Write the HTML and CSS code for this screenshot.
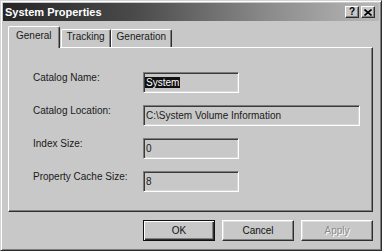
FILE: index.html
```html
<!DOCTYPE html>
<html>
<head>
<meta charset="utf-8">
<title>System Properties</title>
<link rel="stylesheet" href="styles.css">
</head>
<body>
<div class="window">
  <div class="titlebar">
    <span class="title">System Properties</span>
    <div class="caption-btns">
      <span class="cbtn help">?</span>
      <span class="cbtn close"><svg width="8" height="7" viewBox="0 0 8 7"><path d="M0.5 0.5 L7.5 6.5 M7.5 0.5 L0.5 6.5" stroke="#000" stroke-width="1.6" fill="none"/></svg></span>
    </div>
  </div>
  <div class="body">
    <div class="tabs">
      <div class="tab active">General</div>
      <div class="tab">Tracking</div>
      <div class="tab">Generation</div>
    </div>
    <div class="panel">
      <div class="fields">
        <span class="label">Catalog Name:</span>
        <div class="field short"><span class="sel">System</span></div>
        <span class="label">Catalog Location:</span>
        <div class="field long">C:\System Volume Information</div>
        <span class="label">Index Size:</span>
        <div class="field short">0</div>
        <span class="label">Property Cache Size:</span>
        <div class="field short">8</div>
      </div>
    </div>
    <div class="actions">
      <button class="btn default">OK</button>
      <button class="btn">Cancel</button>
      <button class="btn disabled">Apply</button>
    </div>
  </div>
</div>
</body>
</html>
```

FILE: styles.css
```css
html, body {
  margin: 0;
  padding: 0;
}
body {
  width: 382px;
  height: 251px;
  overflow: hidden;
  background: #c8c8c8;
  font-family: "Liberation Sans", Arial, sans-serif;
  font-size: 10px;
  color: #1a1a1a;
}
.window {
  box-sizing: border-box;
  width: 382px;
  height: 251px;
  background: #c8c8c8;
  border: 1px solid;
  border-color: #d4d4d4 #2e2e2e #2e2e2e #d4d4d4;
  box-shadow: inset 1px 1px 0 #fff, inset -1px -1px 0 #7c7c7c;
  padding: 2px;
  display: flex;
  flex-direction: column;
}
.titlebar {
  height: 18px;
  display: flex;
  align-items: center;
  background: linear-gradient(90deg, #262626 0%, #4a4a4a 35%, #8a8a8a 70%, #b8b8b8 100%);
  padding-left: 2px;
}
.title {
  flex: 1;
  color: #fff;
  font-weight: bold;
  font-size: 11px;
  line-height: 18px;
}
.caption-btns {
  display: flex;
  gap: 2px;
  margin-right: 4px;
}
.cbtn {
  box-sizing: border-box;
  width: 14px;
  height: 12px;
  background: #c8c8c8;
  border: 1px solid;
  border-color: #fff #2e2e2e #2e2e2e #fff;
  box-shadow: inset -1px -1px 0 #808080;
  display: flex;
  align-items: center;
  justify-content: center;
  font-weight: bold;
  font-size: 10px;
  line-height: 10px;
  color: #000;
}
.body {
  flex: 1;
  padding: 5px 6px 0 5px;
  display: flex;
  flex-direction: column;
}
.tabs {
  display: flex;
  align-items: flex-end;
  height: 21px;
  position: relative;
  z-index: 1;
}
.tab {
  box-sizing: border-box;
  height: 18px;
  padding: 1px 5px 0;
  line-height: 12px;
  border: 1px solid;
  border-bottom: none;
  border-color: #fff #2e2e2e #fff #fff;
  border-radius: 2px 2px 0 0;
  box-shadow: inset -1px 0 0 #808080;
  background: #c8c8c8;
  white-space: nowrap;
}
.tab.active {
  height: 22px;
  margin-bottom: -1px;
  padding: 3px 7px 0;
  margin-right: 1px;
}
.panel {
  box-sizing: border-box;
  height: 165px;
  border: 1px solid;
  border-color: #fff #2e2e2e #2e2e2e #fff;
  box-shadow: inset -1px -1px 0 #808080;
  padding: 24px 0 0 24px;
}
.fields {
  display: grid;
  grid-template-columns: 110px auto;
  row-gap: 12px;
  justify-items: start;
}
.label {
  line-height: 12px;
  align-self: start;
}
.field {
  box-sizing: border-box;
  height: 21px;
  border: 1px solid;
  border-color: #7c7c7c #fff #fff #7c7c7c;
  box-shadow: inset 1px 1px 0 #3a3a3a, inset -1px -1px 0 #d8d8d8;
  padding: 0 0 0 2px;
  display: flex;
  align-items: center;
  white-space: nowrap;
  line-height: 12px;
}
.field.short { width: 96px; }
.field.long { width: 217px; }
.sel {
  background: #111;
  color: #fff;
  margin-left: -1px;
  padding: 0 1px;
  line-height: 11px;
}
.actions {
  margin-top: 8px;
  display: flex;
  justify-content: flex-end;
  gap: 7px;
}
.btn {
  box-sizing: border-box;
  width: 72px;
  height: 21px;
  margin: 0;
  padding: 0;
  font: inherit;
  font-size: 10px;
  color: #111;
  background: #c8c8c8;
  border: 1px solid;
  border-color: #fff #2e2e2e #2e2e2e #fff;
  box-shadow: inset -1px -1px 0 #808080, inset 1px 1px 0 #dedede;
}
.btn.default {
  border-color: #111;
  box-shadow: inset 1px 1px 0 #fff, inset -1px -1px 0 #2e2e2e, inset -2px -2px 0 #808080;
}
.btn.disabled {
  color: #8a8a8a;
  text-shadow: 1px 1px 0 #fff;
}
```
